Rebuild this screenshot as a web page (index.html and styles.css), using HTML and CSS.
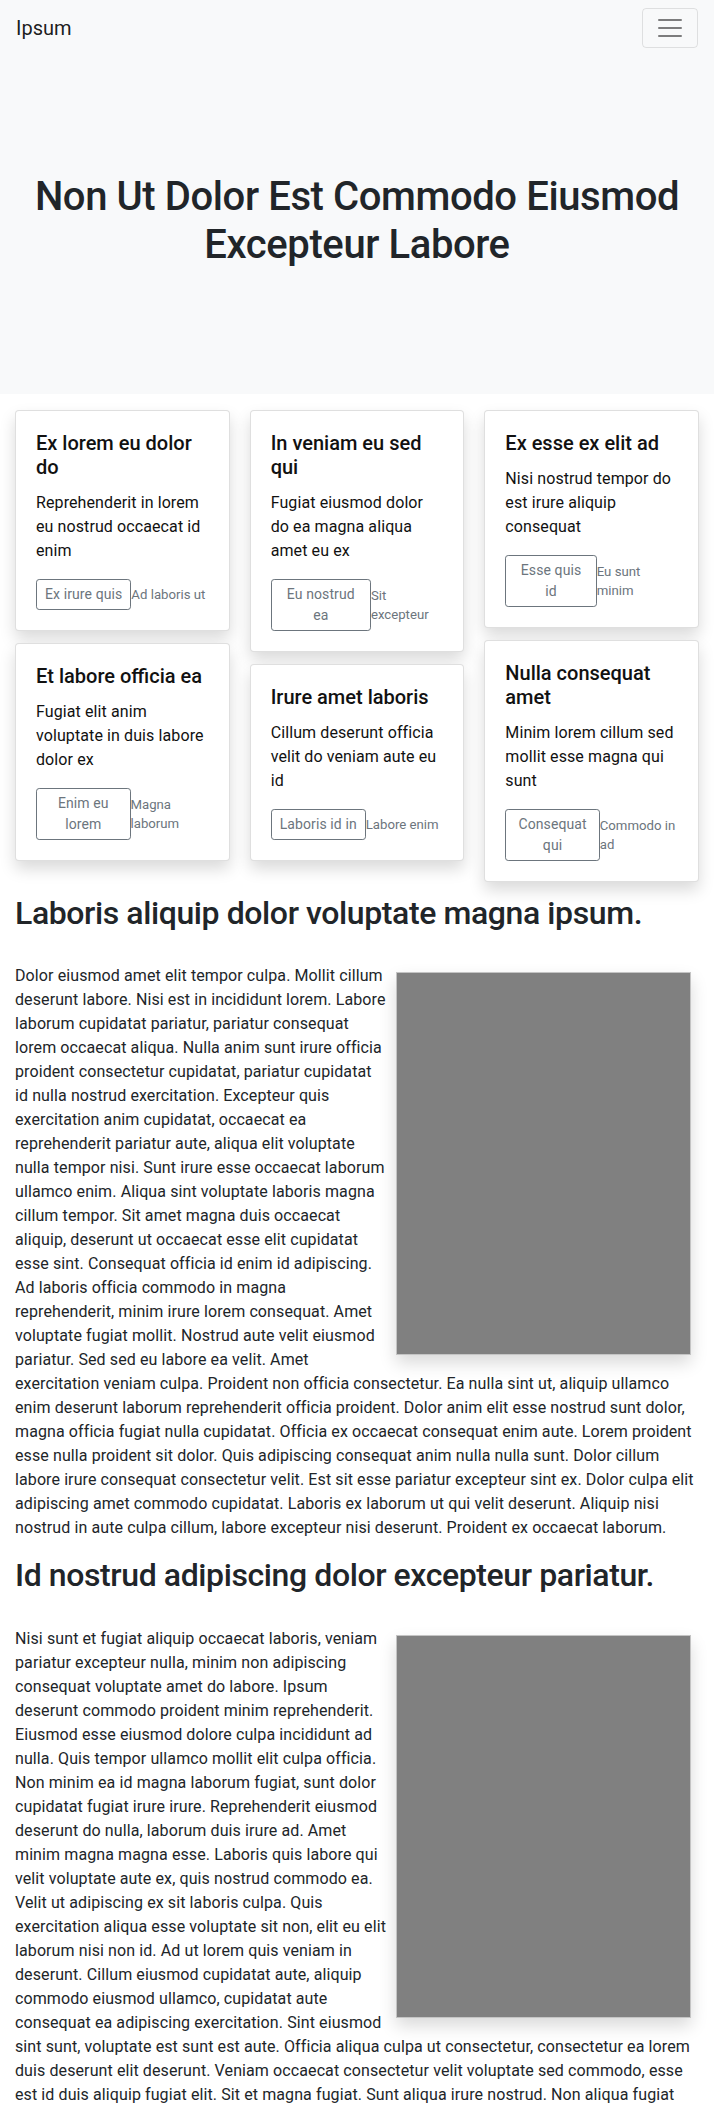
FILE: index.html
```html
<!DOCTYPE html>
<html lang="en">
<head>
<meta charset="utf-8">
<title>Ipsum</title>
<link rel="stylesheet" href="styles.css">
</head>
<body>
<nav class="navbar">
  <a class="brand" href="#">Ipsum</a>
  <button class="toggler" type="button" aria-label="Toggle navigation">
    <svg class="toggler-icon" width="30" height="30" viewBox="0 0 30 30" aria-hidden="true">
      <path d="M4 7h22M4 15h22M4 23h22" stroke="rgba(0,0,0,0.5)" stroke-width="2" stroke-linecap="round" fill="none"/>
    </svg>
  </button>
</nav>
<header class="hero">
  <h1 class="hero-title">Non Ut Dolor Est Commodo Eiusmod Excepteur Labore</h1>
</header>
<main class="container">
  <div class="card-grid">
    <div class="card-col">
      <div class="card">
        <h5 class="card-title">Ex lorem eu dolor do</h5>
        <p class="card-text">Reprehenderit in lorem eu nostrud occaecat id enim</p>
        <div class="card-actions"><button class="btn" type="button">Ex irure quis</button><small class="muted">Ad laboris ut</small></div>
      </div>
      <div class="card">
        <h5 class="card-title">Et labore officia ea</h5>
        <p class="card-text">Fugiat elit anim voluptate in duis labore dolor ex</p>
        <div class="card-actions"><button class="btn" type="button">Enim eu lorem</button><small class="muted">Magna laborum</small></div>
      </div>
    </div>
    <div class="card-col">
      <div class="card">
        <h5 class="card-title">In veniam eu sed qui</h5>
        <p class="card-text">Fugiat eiusmod dolor do ea magna aliqua amet eu ex</p>
        <div class="card-actions"><button class="btn" type="button">Eu nostrud ea</button><small class="muted">Sit excepteur</small></div>
      </div>
      <div class="card">
        <h5 class="card-title">Irure amet laboris</h5>
        <p class="card-text">Cillum deserunt officia velit do veniam aute eu id</p>
        <div class="card-actions"><button class="btn" type="button">Laboris id in</button><small class="muted">Labore enim</small></div>
      </div>
    </div>
    <div class="card-col">
      <div class="card">
        <h5 class="card-title">Ex esse ex elit ad</h5>
        <p class="card-text">Nisi nostrud tempor do est irure aliquip consequat</p>
        <div class="card-actions"><button class="btn" type="button">Esse quis id</button><small class="muted">Eu sunt minim</small></div>
      </div>
      <div class="card">
        <h5 class="card-title">Nulla consequat amet</h5>
        <p class="card-text">Minim lorem cillum sed mollit esse magna qui sunt</p>
        <div class="card-actions"><button class="btn" type="button">Consequat qui</button><small class="muted">Commodo in ad</small></div>
      </div>
    </div>
  </div>

  <section class="article">
    <h2 class="article-title">Laboris aliquip dolor voluptate magna ipsum.</h2>
    <p class="article-text"><span class="figure" role="img" aria-label="placeholder image"></span>Dolor eiusmod amet elit tempor culpa. Mollit cillum deserunt labore. Nisi est in incididunt lorem. Labore laborum cupidatat pariatur, pariatur consequat lorem occaecat aliqua. Nulla anim sunt irure officia proident consectetur cupidatat, pariatur cupidatat id nulla nostrud exercitation. Excepteur quis exercitation anim cupidatat, occaecat ea reprehenderit pariatur aute, aliqua elit voluptate nulla tempor nisi. Sunt irure esse occaecat laborum ullamco enim. Aliqua sint voluptate laboris magna cillum tempor. Sit amet magna duis occaecat aliquip, deserunt ut occaecat esse elit cupidatat esse sint. Consequat officia id enim id adipiscing. Ad laboris officia commodo in magna reprehenderit, minim irure lorem consequat. Amet voluptate fugiat mollit. Nostrud aute velit eiusmod pariatur. Sed sed eu labore ea velit. Amet exercitation veniam culpa. Proident non officia consectetur. Ea nulla sint ut, aliquip ullamco enim deserunt laborum reprehenderit officia proident. Dolor anim elit esse nostrud sunt dolor, magna officia fugiat nulla cupidatat. Officia ex occaecat consequat enim aute. Lorem proident esse nulla proident sit dolor. Quis adipiscing consequat anim nulla nulla sunt. Dolor cillum labore irure consequat consectetur velit. Est sit esse pariatur excepteur sint ex. Dolor culpa elit adipiscing amet commodo cupidatat. Laboris ex laborum ut qui velit deserunt. Aliquip nisi nostrud in aute culpa cillum, labore excepteur nisi deserunt. Proident ex occaecat laborum.</p>
  </section>

  <section class="article">
    <h2 class="article-title">Id nostrud adipiscing dolor excepteur pariatur.</h2>
    <p class="article-text"><span class="figure" role="img" aria-label="placeholder image"></span>Nisi sunt et fugiat aliquip occaecat laboris, veniam pariatur excepteur nulla, minim non adipiscing consequat voluptate amet do labore. Ipsum deserunt commodo proident minim reprehenderit. Eiusmod esse eiusmod dolore culpa incididunt ad nulla. Quis tempor ullamco mollit elit culpa officia. Non minim ea id magna laborum fugiat, sunt dolor cupidatat fugiat irure irure. Reprehenderit eiusmod deserunt do nulla, laborum duis irure ad. Amet minim magna magna esse. Laboris quis labore qui velit voluptate aute ex, quis nostrud commodo ea. Velit ut adipiscing ex sit laboris culpa. Quis exercitation aliqua esse voluptate sit non, elit eu elit laborum nisi non id. Ad ut lorem quis veniam in deserunt. Cillum eiusmod cupidatat aute, aliquip commodo eiusmod ullamco, cupidatat aute consequat ea adipiscing exercitation. Sint eiusmod sint sunt, voluptate est sunt est aute. Officia aliqua culpa ut consectetur, consectetur ea lorem duis deserunt elit deserunt. Veniam occaecat consectetur velit voluptate sed commodo, esse est id duis aliquip fugiat elit. Sit et magna fugiat. Sunt aliqua irure nostrud. Non aliqua fugiat ullamco cupidatat velit, deserunt dolor commodo minim ex. Irure esse laboris occaecat tempor.</p>
  </section>
</main>
</body>
</html>
```
FILE: styles.css
```css
* {
  box-sizing: border-box;
}

html, body {
  margin: 0;
  padding: 0;
}

body {
  font-family: Roboto, "Liberation Sans", Arial, sans-serif;
  font-size: 16px;
  line-height: 1.5;
  letter-spacing: 0.1px;
  color: #212529;
  background: #fff;
}

.navbar {
  display: flex;
  align-items: center;
  justify-content: space-between;
  height: 56px;
  padding: 8px 16px;
  background: #f8f9fa;
}

.brand {
  font-size: 20px;
  line-height: 30px;
  letter-spacing: 0;
  color: rgba(0, 0, 0, 0.9);
  text-decoration: none;
}

.toggler {
  display: flex;
  align-items: center;
  justify-content: center;
  width: 56px;
  height: 40px;
  padding: 4px 12px;
  background: transparent;
  border: 1px solid rgba(0, 0, 0, 0.1);
  border-radius: 4px;
}

.toggler-icon {
  display: block;
  width: 30px;
  height: 30px;
}

.hero {
  background: #f8f9fa;
  padding: 117px 15px;
}

.hero-title {
  margin: 0 0 8px;
  font-size: 40px;
  line-height: 1.2;
  font-weight: 500;
  letter-spacing: -0.4px;
  text-align: center;
  color: #212529;
}

.container {
  padding: 0 15px;
}

.card-grid {
  display: grid;
  grid-template-columns: repeat(3, 1fr);
  column-gap: 20px;
  align-items: start;
  margin-top: 16px;
}

.card-col {
  display: flex;
  flex-direction: column;
  gap: 12px;
  padding-bottom: 12px;
}

.card {
  background: #fff;
  border: 1px solid rgba(0, 0, 0, 0.125);
  border-radius: 4px;
  box-shadow: 0 8px 16px rgba(0, 0, 0, 0.15);
  padding: 20px;
}

.card-title {
  margin: 0 0 12px;
  font-size: 20px;
  line-height: 1.2;
  font-weight: 500;
  letter-spacing: 0;
  color: #111;
}

.card-text {
  margin: 0 0 16px;
  color: #111;
}

.card-actions {
  display: flex;
  align-items: center;
}

.btn {
  font-family: inherit;
  font-size: 14px;
  line-height: 1.5;
  letter-spacing: 0.1px;
  padding: 4px 8px;
  color: #6c757d;
  background: transparent;
  border: 1px solid #6c757d;
  border-radius: 3.2px;
  text-align: center;
}

.muted {
  font-size: 13.2px;
  line-height: 19px;
  letter-spacing: 0;
  color: #6c757d;
}

.article {
  display: flow-root;
}

.article-title {
  margin: 0 0 32px;
  font-size: 32px;
  line-height: 1.2;
  font-weight: 500;
  letter-spacing: -0.4px;
}

.article-text {
  margin: 0 0 16px;
}

.figure {
  float: right;
  width: 295px;
  height: 383px;
  margin: 8px;
  background: #808080;
  border: 1px solid #c4c4c4;
  box-shadow: 0 8px 16px rgba(0, 0, 0, 0.15);
}
```
